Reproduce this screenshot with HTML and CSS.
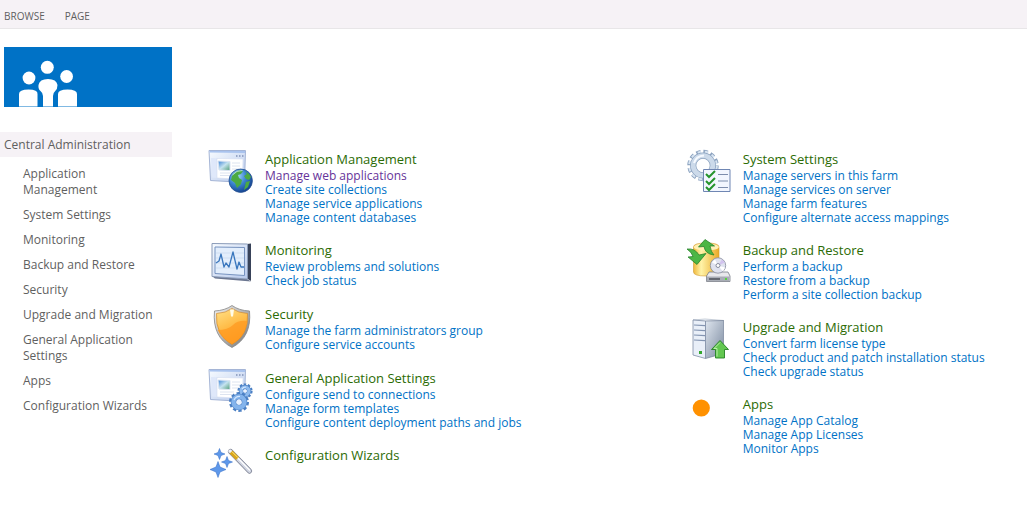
FILE: index.html
```html
<!DOCTYPE html>
<html lang="en">
<head>
    <meta charset="UTF-8">
    <meta name="viewport" content="width=device-width, initial-scale=1.0">
    <title>Central Administration</title>
    <link rel="stylesheet" href="styles.css">
</head>
<body>
    <header class="ribbon">
        <button type="button">BROWSE</button>
        <button type="button">PAGE</button>
    </header>

    <div class="page">
        <aside class="sidebar">
            <a class="logo" href="#" aria-label="Home">
                <svg width="168" height="60" viewBox="0 0 168 60" fill="#fff">
                    <circle cx="25" cy="31" r="6.4"/>
                    <circle cx="43.3" cy="20.3" r="6.5"/>
                    <circle cx="62.6" cy="29.5" r="6.4"/>
                    <path d="M15 59.5V47q0-4.500 9.500-4.500T33.500 47v12.500z"/>
                    <path d="M54 59.5V47q0-4.500 9.500-4.500T73 47v12.500z"/>
                    <path d="M39 59.500V49q0-3-2.500-5T34.500 38q1-6 9.500-6t9.500 6q0 4-2.300 6T49 49v10.500z"/>
                </svg>
            </a>
            <nav class="side-nav">
                <a class="nav-title" href="#">Central Administration</a>
                <ul>
                    <li><a href="#">Application Management</a></li>
                    <li><a href="#">System Settings</a></li>
                    <li><a href="#">Monitoring</a></li>
                    <li><a href="#">Backup and Restore</a></li>
                    <li><a href="#">Security</a></li>
                    <li><a href="#">Upgrade and Migration</a></li>
                    <li><a href="#">General Application Settings</a></li>
                    <li><a href="#">Apps</a></li>
                    <li><a href="#">Configuration Wizards</a></li>
                </ul>
            </nav>
        </aside>

        <main class="content">
            <div class="column">
                <section class="group">
                    <svg class="icon" viewBox="0 0 46 46">
                        <defs>
                            <linearGradient id="frame" x2="1" y2="1"><stop stop-color="#f7fbff"/><stop offset="1" stop-color="#b7c9ec"/></linearGradient>
                            <linearGradient id="pic" x2="1" y2="1"><stop stop-color="#3c82d4"/><stop offset=".5" stop-color="#c5e3f0"/><stop offset="1" stop-color="#4e9b73"/></linearGradient>
                            <radialGradient id="sea" cx=".35" cy=".3" r=".75"><stop stop-color="#a8d8fb"/><stop offset=".5" stop-color="#3a83cf"/><stop offset="1" stop-color="#123f8c"/></radialGradient>
                            <g id="window">
                                <path d="M1 .500H37.500L36.500 32.500 2.500 30.500z" fill="url(#frame)" stroke="#a5b5d6"/>
                                <path d="M1.500 1H37V3L1.500 2.500z" fill="#a9c3ee"/>
                                <path d="M3 8l6 .3V28l-5-.4z" fill="#dfe8fa"/>
                                <path d="M9 8.500l26 .500-.5 20.500L9 28z" fill="#fff" stroke="#d3dcf0" stroke-width=".6"/>
                                <path d="M10 11l12 .5v9l-11-.5z" fill="url(#pic)" stroke="#dae4f3"/>
                                <path d="M24 13h8M24 16h8M24 19h7M12 23h14M12 25.500h12" stroke="#dde4f0"/>
                                <path d="M28 6h1.500M31 6h1.500M34 6h1.500" stroke="#8393b8" stroke-width="1.500"/>
                            </g>
                        </defs>
                        <use href="#window"/>
                        <circle cx="32.700" cy="30.700" r="11.700" fill="url(#sea)" stroke="#244f91" stroke-width=".8"/>
                        <path d="M24 26q3-5 8-6l3 1-2 3-3 1 1 3 3 2-1 4-4 4-2-5-4-3zM37 21q4 2 6 6l-2 3-3-1-2-3 3-2zM38 32l4-1-2 6-4 3z" fill="#4caa43"/>
                        <path d="M24.500 25q4-5 10-4.500" stroke="#e0f4ff" fill="none" opacity=".7"/>
                    </svg>
                    <div class="links">
                        <h2><a href="#">Application Management</a></h2>
                        <ul>
                            <li><a class="visited" href="#">Manage web applications</a></li>
                            <li><a href="#">Create site collections</a></li>
                            <li><a href="#">Manage service applications</a></li>
                            <li><a href="#">Manage content databases</a></li>
                        </ul>
                    </div>
                </section>

                <section class="group">
                    <svg class="icon" viewBox="0 0 46 46">
                        <path d="M39 3l4-.5v37.500l-4-2.500z" fill="#384259"/>
                        <path d="M4 35l35 3 4 2.500-36-3z" fill="#6b7690"/>
                        <path d="M4 2.500l35.500.500v35L4 35.500z" fill="url(#frame)" stroke="#8a9bb8"/>
                        <path d="M7 6l29.500.500v28L7 32.500z" fill="#e3eefc" stroke="#7793c0"/>
                        <path d="M8 12h28M8 17h28M8 22h28M8 27h28" stroke="#c6d7ee" stroke-width=".7"/>
                        <path d="M8 22l3-2 2-7 3 13 2-4 3 4 4-15 4 17 2-7 2 5h3" fill="none" stroke="#3976bd" stroke-width="1.300" stroke-linejoin="round"/>
                    </svg>
                    <div class="links">
                        <h2><a href="#">Monitoring</a></h2>
                        <ul>
                            <li><a href="#">Review problems and solutions</a></li>
                            <li><a href="#">Check job status</a></li>
                        </ul>
                    </div>
                </section>

                <section class="group">
                    <svg class="icon" viewBox="0 0 46 46">
                        <defs>
                            <linearGradient id="steel" x2="1" y2="1"><stop stop-color="#f4f4f4"/><stop offset="1" stop-color="#737373"/></linearGradient>
                            <linearGradient id="amber" x2=".4" y2="1"><stop stop-color="#ffe28a"/><stop offset=".5" stop-color="#ffc04e"/><stop offset="1" stop-color="#ff9c22"/></linearGradient>
                        </defs>
                        <path d="M24 .500q7 5 17.500 5.500Q44 32 24 42.500 4 32 6.500 6 17 5.500 24 .500z" fill="url(#steel)" stroke="#858585" stroke-width=".8"/>
                        <path d="M24 3.500q6 4.500 15.500 5Q41 30 24 39.500 7 30 8.500 8.500 18 8 24 3.500z" fill="url(#amber)" stroke="#d68b2a" stroke-width=".7"/>
                        <path d="M9.500 25Q20 25 25 20t14-4Q38 31 24 39 14 34 9.500 25z" fill="#ff9a20" opacity=".75"/>
                        <path d="M22 4.500h4l-1 7h-2z" fill="#fffbe8"/>
                    </svg>
                    <div class="links">
                        <h2><a href="#">Security</a></h2>
                        <ul>
                            <li><a href="#">Manage the farm administrators group</a></li>
                            <li><a href="#">Configure service accounts</a></li>
                        </ul>
                    </div>
                </section>

                <section class="group">
                    <svg class="icon" viewBox="0 0 46 46">
                        <use href="#window"/>
                        <g fill="none">
                            <circle cx="37" cy="22" r="6.300" stroke="#4c80c4" stroke-width="2.600" stroke-dasharray="2.400 1.558"/>
                            <circle cx="37" cy="22" r="4" stroke="#4c80c4" stroke-width="4.400"/>
                            <circle cx="37" cy="22" r="4" stroke="#8fbbee" stroke-width="3.200"/>
                            <circle cx="31" cy="33" r="8.500" stroke="#4c80c4" stroke-width="3" stroke-dasharray="3.200 2.141"/>
                            <circle cx="31" cy="33" r="5.500" stroke="#4c80c4" stroke-width="5.600"/>
                            <circle cx="31" cy="33" r="5.500" stroke="#84b4ec" stroke-width="4.400"/>
                            <path d="M26 31q2-4 6-3.500M34 20q1-2 4-2" stroke="#d4e8ff" stroke-width="1.200"/>
                        </g>
                        <circle cx="31" cy="33" r="2.500" fill="#e9f2ff"/>
                        <circle cx="37" cy="22" r="1.800" fill="#e9f2ff"/>
                    </svg>
                    <div class="links">
                        <h2><a href="#">General Application Settings</a></h2>
                        <ul>
                            <li><a href="#">Configure send to connections</a></li>
                            <li><a href="#">Manage form templates</a></li>
                            <li><a href="#">Configure content deployment paths and jobs</a></li>
                        </ul>
                    </div>
                </section>

                <section class="group">
                    <svg class="icon" viewBox="0 0 46 46">
                        <g fill="#5e98ea" stroke="#2f68c5" stroke-width=".5">
                            <path d="M11.500 2.500l1.500 4 4 1.500-4 1.500-1.500 4-1.500-4L6 8l4-1.500z"/>
                            <path d="M19 10.500l1.500 4 4 1.500-4 1.500-1.500 4-1.500-4-4-1.500 4-1.500z"/>
                            <path d="M10 15.500l2 5.500 6 2.500-6 2.500-2 5.500L8 26l-6-2.500L8 21z"/>
                        </g>
                        <g stroke-linecap="round">
                            <path d="M22.500 5.500l19 19.500" stroke="#777c8e" stroke-width="5.200"/>
                            <path d="M22.500 5.500l19 19.500" stroke="#d0d5e2" stroke-width="3.800"/>
                            <path d="M24 6l17.500 18" stroke="#fff" stroke-width="1.200"/>
                        </g>
                        <path d="M23 6l6.500 6.500" stroke="#d9a51b" stroke-width="4"/>
                        <path d="M24 5.700l6 6" stroke="#ffe879"/>
                        <circle cx="22" cy="5" r="1.600" fill="#eef0f5"/>
                    </svg>
                    <div class="links">
                        <h2><a href="#">Configuration Wizards</a></h2>
                    </div>
                </section>
            </div>

            <div class="column">
                <section class="group">
                    <svg class="icon" viewBox="0 0 46 46">
                        <g fill="none">
                            <circle cx="17" cy="15.500" r="13.800" stroke="#8ba2bf" stroke-width="3.800" stroke-dasharray="4.400 2.826"/>
                            <circle cx="17" cy="15.500" r="13.600" stroke="#d9e5f2" stroke-width="2.400" stroke-dasharray="3.400 3.826" stroke-dashoffset="-.5"/>
                            <circle cx="17" cy="15.500" r="9.800" stroke="#8ba2bf" stroke-width="6.200"/>
                            <circle cx="17" cy="15.500" r="9.800" stroke="#ccdaea" stroke-width="4.800"/>
                            <path d="M8 13q2-7 10-7.500" stroke="#f6faff" stroke-width="2"/>
                        </g>
                        <path d="M17.500 19.500h26.500v22H17.500z" fill="#f2f6ff" stroke="#6f86b3"/>
                        <path d="M32 24.500h10M32 31h10M32 37.500h10" stroke="#7d8dad" stroke-width="1.200"/>
                        <path d="M20 24l3 3 6-6M20 31l3 3 6-6M20 37l3 3 6-6" fill="none" stroke="#25942d" stroke-width="2"/>
                    </svg>
                    <div class="links">
                        <h2><a href="#">System Settings</a></h2>
                        <ul>
                            <li><a href="#">Manage servers in this farm</a></li>
                            <li><a href="#">Manage services on server</a></li>
                            <li><a href="#">Manage farm features</a></li>
                            <li><a href="#">Configure alternate access mappings</a></li>
                        </ul>
                    </div>
                </section>

                <section class="group">
                    <svg class="icon" viewBox="0 0 46 46">
                        <defs>
                            <linearGradient id="gold"><stop stop-color="#efb83c"/><stop offset=".3" stop-color="#fff3a8"/><stop offset="1" stop-color="#eaa925"/></linearGradient>
                        </defs>
                        <path d="M7.500 6q0-4 12.800-4T33 6v25q0 4-12.800 4T7.500 31z" fill="url(#gold)" stroke="#d09a30" stroke-width=".6"/>
                        <ellipse cx="20.300" cy="6" rx="12.500" ry="3.700" fill="#fff0b4"/>
                        <g fill="#4cb645" stroke="#1d7a22" stroke-width=".7" stroke-linejoin="round">
                            <path d="M19-1.500l9.500 6.500h-4.500q1 6 4 9-9-1-10-8.500l-5.500.500z"/>
                            <path d="M1 8q8-1 12 6l7-1.500L11 23.500 2 16l5-.5q-1-4-6-7.500z"/>
                        </g>
                        <path d="M23 31h19l2 4v5.500H20.500V35z" fill="#e8e8ec" stroke="#777b85" stroke-width=".8"/>
                        <path d="M21 35.500h22.500V40H21z" fill="#a9adb6"/>
                        <path d="M23 38h11" stroke="#484c55" stroke-width="1.400"/>
                        <path d="M39 38h2" stroke="#56d63d" stroke-width="2"/>
                        <circle cx="32" cy="24.500" r="7.700" fill="#dfe2ef" stroke="#868c9c" stroke-width=".8"/>
                        <path d="M32 24.500l-6-3 3-3zM32 24.500l7 2-2 4z" fill="#fff"/>
                        <path d="M32 24.500l4-6 3 3z" fill="#d2c3ee"/>
                        <circle cx="32" cy="24.500" r="2" fill="#fff" stroke="#868c9c"/>
                    </svg>
                    <div class="links">
                        <h2><a href="#">Backup and Restore</a></h2>
                        <ul>
                            <li><a href="#">Perform a backup</a></li>
                            <li><a href="#">Restore from a backup</a></li>
                            <li><a href="#">Perform a site collection backup</a></li>
                        </ul>
                    </div>
                </section>

                <section class="group">
                    <svg class="icon" viewBox="0 0 46 46">
                        <defs>
                            <linearGradient id="side" x2="1" y2="1"><stop stop-color="#dfe6ef"/><stop offset="1" stop-color="#7a899f"/></linearGradient>
                        </defs>
                        <path d="M7 2l12-1 19 1.500-18 1z" fill="#f5f8fc" stroke="#a3aebf" stroke-width=".6"/>
                        <path d="M19.500 3L37.500 2.500v33l-18 5z" fill="url(#side)" stroke="#76839a" stroke-width=".7"/>
                        <path d="M7 2l12.500 1v37.500L7 37z" fill="#e9eff8" stroke="#7f8da5" stroke-width=".8"/>
                        <path d="M8 7l11 .7M8 12l11 .7M8 17l11 .7M8 22l11 .7" stroke="#8394b1" stroke-width="1.200"/>
                        <path d="M13 34.500h3" stroke="#33a72d" stroke-width="3"/>
                        <path d="M34 22.500l8.500 9H38.500V40h-9v-8.500h-4z" fill="#63c751" stroke="#268125" stroke-width=".9"/>
                        <path d="M34 24.500l-6 6h3v8" fill="none" stroke="#b9efa8"/>
                    </svg>
                    <div class="links">
                        <h2><a href="#">Upgrade and Migration</a></h2>
                        <ul>
                            <li><a href="#">Convert farm license type</a></li>
                            <li><a href="#">Check product and patch installation status</a></li>
                            <li><a href="#">Check upgrade status</a></li>
                        </ul>
                    </div>
                </section>

                <section class="group">
                    <svg class="icon" viewBox="0 0 46 46">
                        <circle cx="15.300" cy="13" r="8.600" fill="#ff9100"/>
                    </svg>
                    <div class="links">
                        <h2><a href="#">Apps</a></h2>
                        <ul>
                            <li><a href="#">Manage App Catalog</a></li>
                            <li><a href="#">Manage App Licenses</a></li>
                            <li><a href="#">Monitor Apps</a></li>
                        </ul>
                    </div>
                </section>
            </div>
        </main>
    </div>
</body>
</html>
```
FILE: styles.css
```css
:root {
    --ribbon: #f6f2f6;
    --brand: #0072c6;
    --heading: #2b6b03;
    --visited: #663399;
    --text: #5f5f5f;
}

* {
    margin: 0;
    padding: 0;
    box-sizing: border-box;
}

body {
    font-family: "Segoe UI", "Open Sans", "Noto Sans", sans-serif;
    font-size: 12px;
    background: #fff;
    color: var(--text);
}

ul {
    list-style: none;
}

a {
    color: inherit;
    text-decoration: none;
}

a:hover {
    text-decoration: underline;
}

.ribbon {
    display: flex;
    gap: 20px;
    padding: 10px 4px 6px;
    background: var(--ribbon);
    border-bottom: 1px solid #e8e6e8;
}

.ribbon button {
    border: none;
    background: none;
    font-family: inherit;
    font-size: 10px;
    line-height: 12px;
    color: var(--text);
    cursor: pointer;
}

.page {
    display: flex;
    gap: 36px;
}

.sidebar {
    flex: 0 0 172px;
    padding-top: 18px;
}

.logo {
    display: block;
    height: 60px;
    margin-left: 4px;
    background: var(--brand);
}

.logo svg {
    display: block;
}

.side-nav {
    margin-top: 25px;
}

.nav-title {
    display: block;
    padding: 1px 4px 0;
    line-height: 24px;
    background: var(--ribbon);
}

.side-nav ul {
    padding: 9px 16px 0 23px;
}

.side-nav li {
    margin-bottom: 9px;
    line-height: 16px;
}

.content {
    flex: 1;
    display: grid;
    grid-template-columns: 7fr 5fr;
    padding-top: 121px;
}

.column {
    display: flex;
    flex-direction: column;
    gap: 16px;
}

.group {
    display: flex;
    gap: 11px;
    min-height: 48px;
}

.icon {
    flex: none;
    width: 46px;
    height: 46px;
    overflow: visible;
}

.links h2 {
    padding-bottom: 1px;
    font-size: 13px;
    font-weight: 400;
    line-height: 18px;
    color: var(--heading);
}

.links li {
    line-height: 14px;
    color: var(--brand);
}

.links li a {
    display: block;
}

.links .visited {
    color: var(--visited);
}
```
